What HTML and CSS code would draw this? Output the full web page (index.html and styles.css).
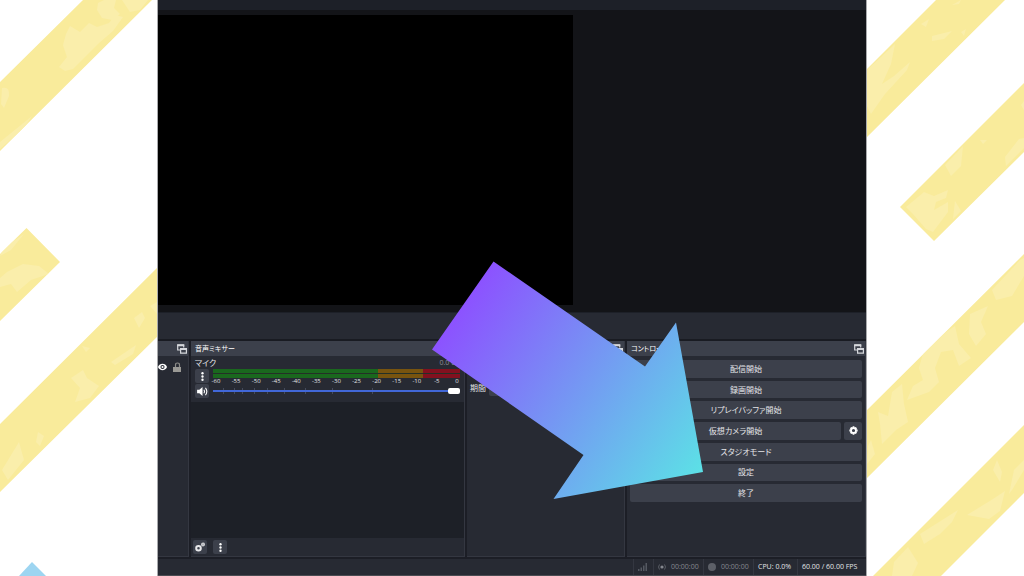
FILE: index.html
```html
<!DOCTYPE html>
<html lang="ja">
<head>
<meta charset="utf-8">
<title>OBS Studio</title>
<link rel="stylesheet" href="styles.css">
</head>
<body>
<svg class="backdrop" viewBox="0 0 1024 576" preserveAspectRatio="none" aria-hidden="true">
  <defs>
    <clipPath id="stripes">
      <path d="M0 82 83 0H152L0 151zM26.500 228 60 262 0 321V254zM160 265V334L0 492V424zM864 72 936 0H1005L864 140zM1024 83V152L934 241 900 207zM1024 254V322L864 481V413zM1024 425V493L941 576H873z"/>
    </clipPath>
  </defs>
  <g clip-path="url(#stripes)">
    <path fill="#f9eb9b" d="M0 0H1024V576H0z"/>
    <g fill="#faeeab">
      <path d="M98 3l6-3h12l-2 8 6 6-8 6-10-2-5-8zM122 0h26l-8 10-10 2-4-6zM66 34l4-8 10 6 9-9 8 4 12-4 6-8 8 2-10 14-14 12-12 12-14 14-8 2-6-4 8-10-4-12z"/>
      <path d="M2 88q8-2 7 8l-5 12-3-4zM0 142l32-26-8 12L0 149z"/>
      <path d="M7 272l16-8 16 2 10 8-18 6-14 12-6-8-11 3v-9zM4 247l20-13-13 16-11 6z"/>
      <path d="M134 318l8-6 3 6-6 10zM150 306l7-4v12zM71 378l12-8 4 8 12 8-9 12-15 4 5-14zM111 362l25-17-3 9-18 11zM38 432l6 4-4 10-4-4zM2 470l17-28 5 18-16 20zM82 346l8 2-4 4z"/>
      <path d="M867 70l28-26-4 20-9 20 12-8 16-14-3 8-22 24-14 20-4-8zM932 36l20-5-8 8-12 2zM921 24l8-5-3 8zM952 5l9-5-2 4zM961 32l5-3-2 7z"/>
      <path d="M945 165l18-19-2 20-10 10zM906 207l18-15 10 4 14-6-2 8-10 4-2 8 14-8 0 10-15 20-7-3-14-16zM955 201l6 10-8 8zM1005 157l14-18 5-1v10l-18 18zM980 140l7 0-4 4zM1021 105l3-4v9z"/>
      <path d="M992 290l28-30 4-2v18l-12 20-16 4zM970 314l18-8-7 16 5 12-10 12-7-12zM925 346l30-20 4 18 12 14-12 8-6-16-12 2-6 16 4 14-10 10-22 8 6-14 10-6-4-12zM892 392l10-8 2 20 4 18-12 8-14 14-2-20-2-12 10 4z"/>
      <path d="M868 446l3-6 4 14-8 10z"/>
      <path d="M993 470l4-10 5 12-2 10zM1009 494l5-24 10-10v10l-12 20zM967 515l26-16 12-8-5 20-11 8zM920 534l38-24-6 12-12 12-16 10zM894 562l14-15 10 16-6 13h-20z"/>
    </g>
  </g>
  <path fill="#9dd5f1" d="M32 562 46 576H19z"/>
</svg>

<svg class="symbols" aria-hidden="true">
  <symbol id="float" viewBox="0 0 10 10"><path fill="none" stroke="#d5d7dc" stroke-width="1.200" d="M3.500 6H.700V1h6v2.500"/><path fill="none" stroke="#d5d7dc" stroke-width="1.200" d="M3.600 4.600h5.800v4.600H3.600z"/><path stroke="#d5d7dc" stroke-width="2" d="M.200 1.300h7M3 5h7"/></symbol>
  <symbol id="dots" viewBox="0 0 10 10"><circle cx="5" cy="1.400" r="1.300"/><circle cx="5" cy="5" r="1.300"/><circle cx="5" cy="8.600" r="1.300"/></symbol>
  <symbol id="gear" viewBox="0 0 10 10"><circle cx="5" cy="5" r="2.800" fill="none" stroke="#fff" stroke-width="2"/><path stroke="#fff" stroke-width="2" d="M5 .4v1.400M5 8.200v1.400M.4 5h1.400M8.200 5h1.400M1.800 1.800l.9.900M7.300 7.300l.9.900M8.200 1.800l-.9.900M2.700 7.300l-.9.900"/></symbol>
</svg>

<main class="app">
  <div class="toolbar"></div>
  <section class="preview"><div class="canvas"></div></section>
  <div class="context-bar"></div>

  <div class="docks">
    <section class="dock sources">
      <header class="dock-head"><svg class="float-icon"><use href="#float"/></svg></header>
      <div class="source-row">
        <svg class="eye" viewBox="0 0 10 8"><path fill="#fff" d="M0 4Q1.500.5 5 .5T10 4Q8.500 7.500 5 7.500T0 4z"/><circle cx="5" cy="4" r="2.300" fill="#272a33"/><circle cx="5" cy="4" r="1.200" fill="#fff"/></svg>
        <svg class="lock" viewBox="0 0 8 10"><path fill="none" stroke="#8b8b88" stroke-width="1.200" d="M2.500 5V3q0-2 2-2t2 2v2"/><path fill="#9a9995" d="M0 5h8v5H0z"/></svg>
      </div>
    </section>

    <section class="dock mixer">
      <header class="dock-head"><h2>音声ミキサー</h2></header>
      <div class="channel">
        <div class="channel-name"><label for="vol">マイク</label><output for="vol">0.0 dB</output></div>
        <div class="channel-body">
          <div class="channel-buttons">
            <button class="icon-btn" aria-label="メニュー"><svg class="glyph"><use href="#dots"/></svg></button>
            <button class="icon-btn" aria-label="ミュート"><svg class="speaker" viewBox="0 0 12 10"><path fill="#fff" d="M0 3h2.500L6 0v10L2.500 7H0z"/><path fill="none" stroke="#fff" stroke-width="1.200" d="M7.500 3q1.500 2 0 4M9.300 1q3 4 0 8"/></svg></button>
          </div>
          <div class="levels">
            <div class="meter"><i></i><i></i></div>
            <div class="scale"><span>-60</span><span>-55</span><span>-50</span><span>-45</span><span>-40</span><span>-35</span><span>-30</span><span>-25</span><span>-20</span><span>-15</span><span>-10</span><span>-5</span><span>0</span></div>
            <div class="fader">
              <svg class="ticks" viewBox="0 0 247 8" preserveAspectRatio="none"><path stroke="#454b5c" d="M10.500 1v6M21.500 1v6M29.500 1v6M41.500 1v6M54.500 1v6M71.500 1v6M92.500 1v6M119.500 1v6M159.500 1v6"/></svg>
              <input id="vol" type="range" min="0" max="100" value="100">
            </div>
          </div>
        </div>
      </div>
      <div class="mixer-space"></div>
      <footer class="mixer-tools">
        <button class="icon-btn" aria-label="詳細設定"><svg class="gears" viewBox="0 0 10 10"><circle cx="3.500" cy="6.200" r="2.300" fill="none" stroke="#e8e8ea" stroke-width="2"/><circle cx="8" cy="2.500" r="1.200" fill="none" stroke="#c9cace" stroke-width="1.700"/></svg></button>
        <button class="icon-btn" aria-label="ミキサーメニュー"><svg class="glyph"><use href="#dots"/></svg></button>
      </footer>
    </section>

    <section class="dock transitions">
      <header class="dock-head"><svg class="float-icon"><use href="#float"/></svg></header>
      <div class="duration"><label for="dur">期間</label><input id="dur" type="text"></div>
    </section>

    <section class="dock controls">
      <header class="dock-head"><h2>コントロール</h2><svg class="float-icon"><use href="#float"/></svg></header>
      <div class="actions">
        <button>配信開始</button>
        <button>録画開始</button>
        <button>リプレイバッファ開始</button>
        <div class="split"><button>仮想カメラ開始</button><button class="cam-settings" aria-label="仮想カメラ設定"><svg class="glyph"><use href="#gear"/></svg></button></div>
        <button>スタジオモード</button>
        <button>設定</button>
        <button>終了</button>
      </div>
    </section>
  </div>

  <footer class="status">
    <div class="cell signal"><svg class="bars" viewBox="0 0 9 8"><path fill="#555962" d="M0 6h1.500v2H0zM2.500 4.500H4V8H2.500zM5 2.500h1.500V8H5zM7.500 0H9v8H7.500z"/></svg></div>
    <div class="cell timer dim"><svg class="live" viewBox="0 0 8 8"><circle cx="4" cy="4" r="1.600" fill="#85888f"/><path fill="none" stroke="#5a5e66" d="M1.500 1.500q-2 2.500 0 5M6.500 1.500q2 2.500 0 5"/></svg>00:00:00</div>
    <div class="cell timer dim"><span class="rec"></span>00:00:00</div>
    <div class="cell cpu">CPU: 0.0%</div>
    <div class="cell fps">60.00 / 60.00 FPS</div>
  </footer>
</main>

<svg class="arrow" viewBox="0 0 1024 576" preserveAspectRatio="none" aria-hidden="true">
  <defs><linearGradient id="sweep" gradientUnits="userSpaceOnUse" x1="462" y1="305" x2="703" y2="472"><stop offset="0" stop-color="#8c52ff"/><stop offset="1" stop-color="#5ce1e6"/></linearGradient></defs>
  <path fill="url(#sweep)" d="M493.500 261.500 645 366.500 676 322.500 703 472 553.500 499 583.500 455 432 349.500z"/>
</svg>
</body>
</html>
```
FILE: styles.css
```css
* { box-sizing: border-box; }

body {
  margin: 0;
  height: 100vh;
  overflow: hidden;
  position: relative;
  background: #fff;
  color: #e4e5e8;
  font: 8px/10px "Open Sans", "Noto Sans CJK JP", sans-serif;
  font-feature-settings: "palt";
}

svg { display: block; }
button, input { font: inherit; color: inherit; font-feature-settings: inherit; }
button {
  border: 0;
  padding: 0;
  border-radius: 2px;
  background: #3c404b;
}
h2 { margin: 0; font: inherit; font-size: 7px; color: #fff; }

.symbols { position: absolute; width: 0; height: 0; }
.backdrop, .arrow { position: absolute; inset: 0; width: 100%; height: 100%; }
.arrow { pointer-events: none; }

.app {
  position: relative;
  display: flex;
  flex-direction: column;
  height: 100%;
  margin: 0 158px;
  background: #272a33;
  box-shadow: 0 0 0 1px #a9aaad;
}

.toolbar { height: 10px; background: #1d2028; }
.preview {
  flex: 1;
  padding: 5px 0 7px;
  background: #131418;
}
.canvas { width: 415px; max-width: 100%; height: 100%; background: #000; }
.context-bar {
  height: 29px;
  border-top: 1px solid #1d2028;
  border-bottom: 2px solid #191b22;
}

.docks {
  display: grid;
  grid-template-columns: 31px 274px 158px 1fr;
  gap: 2px;
  height: 216px;
  background: #1c1e26;
}
.dock {
  display: flex;
  flex-direction: column;
  min-width: 0;
  background: #272a33;
  border-bottom: 1px solid #343741;
  border-right: 1px solid #343741;
}
.dock-head {
  display: flex;
  align-items: center;
  height: 15px;
  padding: 0 1px 0 4px;
  background: #3c404b;
}
.float-icon { width: 10px; height: 10px; margin-left: auto; }

.source-row { display: flex; align-items: center; gap: 6px; height: 22px; }
.eye { width: 9px; height: 8px; }
.lock { width: 8px; height: 10px; }

.channel { padding: 2px 4px 4px; }
.channel-name { display: flex; justify-content: space-between; height: 11px; }
.channel-name output { color: #8e9096; font-size: 7px; }
.channel-body { display: flex; gap: 4px; }
.channel-buttons { display: grid; gap: 1px; }
.icon-btn {
  display: grid;
  place-items: center;
  width: 14px;
  height: 14px;
}
.glyph { width: 9px; height: 9px; fill: #fff; }
.speaker { width: 11px; height: 9px; }
.levels { flex: 1; min-width: 0; }
.meter { display: grid; gap: 1px; background: #243027; }
.meter i {
  height: 4px;
  background: linear-gradient(90deg, #1a681e 67%, #78540f 67% 85%, #82111f 85%);
}
.scale {
  display: flex;
  justify-content: space-between;
  height: 8px;
  font-size: 6px;
  line-height: 7px;
}
.scale span { display: flex; justify-content: center; width: 6px; }
.fader { position: relative; height: 10px; }
.ticks { position: absolute; inset: 1px 0; width: 100%; height: 8px; }
.fader input {
  position: relative;
  display: block;
  width: 100%;
  height: 10px;
  margin: 0;
  appearance: none;
  background: linear-gradient(#4167d8, #4167d8) center / 100% 2px no-repeat;
}
.fader input::-webkit-slider-thumb {
  appearance: none;
  width: 12px;
  height: 6px;
  border-radius: 2px;
  background: #fff;
}
.mixer-space { flex: 1; background: #1d2027; }
.mixer-tools { display: flex; gap: 6px; padding: 2px 2px; }
.gears { width: 10px; height: 10px; }

.duration { display: flex; align-items: center; gap: 3px; margin-top: 24px; padding: 0 4px 0 3px; }
.duration input {
  flex: 1;
  min-width: 0;
  height: 16px;
  border: 0;
  border-radius: 2px;
  background: #3c404b;
}

.actions {
  display: grid;
  grid-auto-rows: 1fr;
  gap: 3px;
  height: 146px;
  padding: 4px 3px 0;
}
.split { display: grid; grid-template-columns: 1fr 18px; gap: 3px; }
.cam-settings { display: grid; place-items: center; }

.status {
  display: flex;
  justify-content: flex-end;
  height: 19px;
  border-top: 2px solid #1c1e26;
  border-bottom: 1px solid #4a4c52;
  font-size: 7px;
}
.cell {
  display: flex;
  align-items: center;
  padding: 0 4px;
  border-left: 1px solid #343741;
}
.signal { width: 20px; }
.bars { width: 9px; height: 8px; }
.timer { width: 50px; gap: 5px; }
.dim { color: #858890; }
.live { width: 8px; height: 8px; }
.rec { width: 8px; height: 8px; border-radius: 50%; background: #5d6068; }
.cpu { width: 44px; }
.fps { width: 69px; }
```
